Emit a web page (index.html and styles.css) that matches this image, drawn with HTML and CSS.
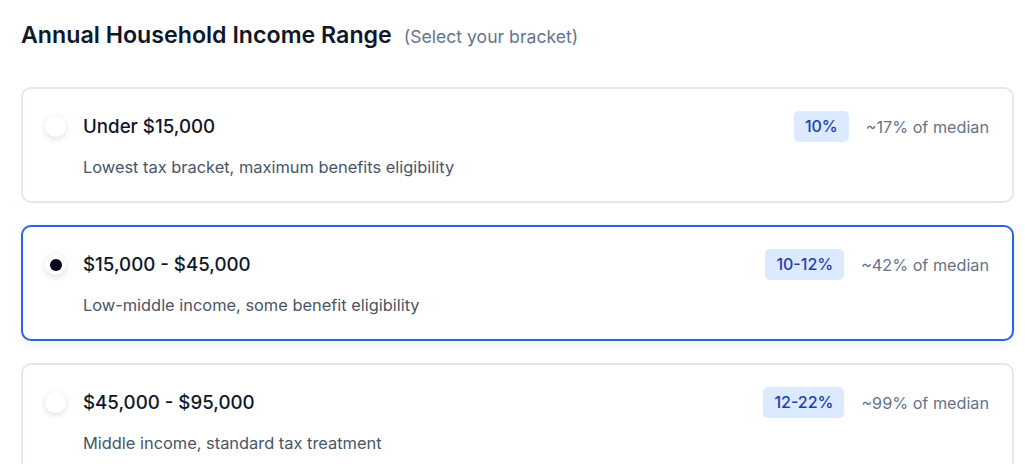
FILE: index.html
```html
<!DOCTYPE html>
<html>
<head>
<meta charset="utf-8">
<link rel="stylesheet" href="styles.css">
</head>
<body>
<div class="page">
  <div class="header">
    <h1 class="title">Annual Household Income Range</h1>
    <span class="hint">(Select your bracket)</span>
  </div>
  <div class="options">
    <div class="card">
      <div class="row">
        <span class="radio"></span>
        <span class="label">Under $15,000</span>
        <span class="badge">10%</span>
        <span class="median">~17% of median</span>
      </div>
      <div class="desc">Lowest tax bracket, maximum benefits eligibility</div>
    </div>
    <div class="card selected">
      <div class="row">
        <span class="radio"><span class="dot"></span></span>
        <span class="label">$15,000 - $45,000</span>
        <span class="badge">10-12%</span>
        <span class="median">~42% of median</span>
      </div>
      <div class="desc">Low-middle income, some benefit eligibility</div>
    </div>
    <div class="card">
      <div class="row">
        <span class="radio"></span>
        <span class="label">$45,000 - $95,000</span>
        <span class="badge">12-22%</span>
        <span class="median">~99% of median</span>
      </div>
      <div class="desc">Middle income, standard tax treatment</div>
    </div>
  </div>
</div>
</body>
</html>
```

FILE: styles.css
```css
* { box-sizing: border-box; }
html, body { margin: 0; padding: 0; background: #ffffff; }
body { font-family: Inter, "Noto Sans", sans-serif; color: #0f172a; }
.page { padding: 19px 11px 0 21px; }
.header { display: flex; align-items: baseline; gap: 12px; height: 32px; margin-bottom: 36px; }
.title { margin: 0; font-size: 23.2px; font-weight: 600; line-height: 32px; color: #0f172a; }
.hint { font-size: 17.6px; color: #64748b; }
.options { display: flex; flex-direction: column; gap: 22px; }
.card { border: 2px solid #e2e8f0; border-radius: 10px; padding: 22px 23px 22px 22px; background: #fff; }
.card.selected { border-color: #2563eb; box-shadow: 0 4px 8px rgba(15, 23, 42, 0.06); }
.row { display: flex; align-items: center; height: 31px; }
.radio { width: 21px; height: 21px; border-radius: 50%; background: #fff; box-shadow: 0 2px 6px rgba(15, 23, 42, 0.14); display: flex; align-items: center; justify-content: center; flex-shrink: 0; margin-right: 17px; }
.dot { width: 12px; height: 12px; border-radius: 50%; background: #020617; }
.label { font-size: 18.7px; font-weight: 500; flex: 1; color: #0f172a; }
.badge { background: #dbeafe; color: #1e40af; font-size: 16px; font-weight: 500; border-radius: 5px; padding: 0 11px; height: 31px; line-height: 31px; }
.median { font-size: 16.2px; color: #64748b; margin-left: 17px; }
.desc { margin: 14px 0 0 38px; font-size: 16.4px; line-height: 23px; color: #475569; }
```
